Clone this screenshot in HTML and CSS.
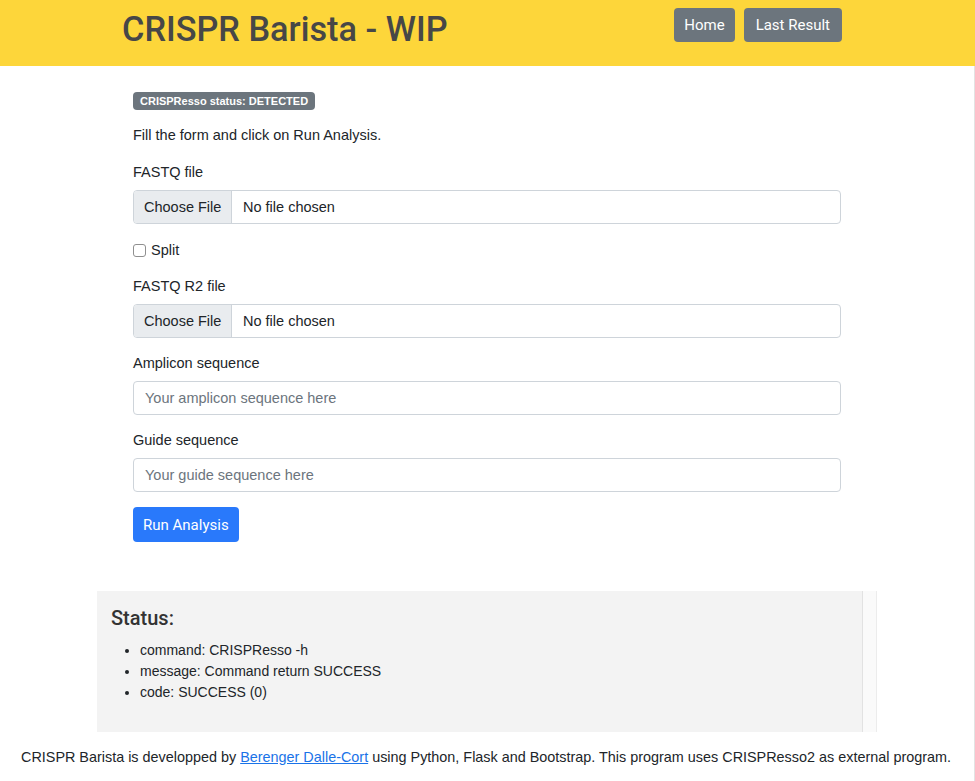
FILE: index.html
```html
<!DOCTYPE html>
<html>
<head>
<meta charset="utf-8">
<title>CRISPR Barista</title>
<link rel="stylesheet" href="styles.css">
</head>
<body>
<header class="topbar">
  <div class="topbar-inner">
    <h1 class="brand">CRISPR Barista - WIP</h1>
    <nav class="nav">
      <a class="btn btn-gray" href="#">Home</a>
      <a class="btn btn-gray" href="#">Last Result</a>
    </nav>
  </div>
</header>
<div class="page">
  <main class="main">
    <span class="badge">CRISPResso status: DETECTED</span>
    <p class="intro">Fill the form and click on Run Analysis.</p>
    <form class="form">
      <label class="label">FASTQ file</label>
      <div class="file"><span class="file-btn">Choose File</span><span class="file-name">No file chosen</span></div>
      <label class="check"><span class="box"></span>Split</label>
      <label class="label">FASTQ R2 file</label>
      <div class="file"><span class="file-btn">Choose File</span><span class="file-name">No file chosen</span></div>
      <label class="label">Amplicon sequence</label>
      <input class="input" type="text" placeholder="Your amplicon sequence here">
      <label class="label">Guide sequence</label>
      <input class="input" type="text" placeholder="Your guide sequence here">
      <button class="btn btn-blue" type="button">Run Analysis</button>
    </form>
  </main>
  <section class="status-row">
    <div class="status">
      <h2 class="status-title">Status:</h2>
      <ul class="status-list">
        <li>command: CRISPResso -h</li>
        <li>message: Command return SUCCESS</li>
        <li>code: SUCCESS (0)</li>
      </ul>
    </div>
    <div class="status-side"></div>
  </section>
  <footer class="footer">CRISPR Barista is developped by <a href="#">Berenger Dalle-Cort</a> using Python, Flask and Bootstrap. This program uses CRISPResso2 as external program.</footer>
</div>
</body>
</html>
```
FILE: styles.css
```css
* { box-sizing: border-box; }
html, body { margin: 0; padding: 0; }
body {
  font-family: "Liberation Sans", Arial, sans-serif;
  color: #212529;
  background: #fff;
  font-size: 14.5px;
  width: 975px;
  height: 781px;
  overflow: hidden;
}
.topbar {
  background: #fdd63a;
  height: 66px;
}
.topbar-inner {
  display: flex;
  justify-content: space-between;
  align-items: flex-start;
  margin-left: 122px;
  width: 720px;
}
.brand {
  margin: 0;
  font-family: Roboto, "Liberation Sans", sans-serif;
  font-weight: 500;
  font-size: 34.3px;
  line-height: 58px;
  color: #474747;
}
.nav {
  display: flex;
  gap: 9px;
  padding-top: 8px;
}
.btn {
  display: inline-flex;
  align-items: center;
  justify-content: center;
  height: 34px;
  padding: 0 12px;
  border-radius: 4px;
  font-family: Roboto, "Liberation Sans", sans-serif;
  font-size: 15px;
  color: #fff;
  text-decoration: none;
  border: 0;
  white-space: nowrap;
}
.nav .btn:first-child { padding: 0 10px; }
.btn-gray { background: #6c757d; }
.page {
  border-right: 1px solid #e3e3e3;
  height: 715px;
  width: 975px;
}
.main {
  margin-left: 133px;
  width: 708px;
  padding-top: 26px;
}
.badge {
  display: inline-block;
  background: #6c757d;
  color: #fff;
  font-weight: 700;
  font-size: 11px;
  line-height: 18px;
  padding: 0 7px;
  border-radius: 4px;
}
.intro {
  margin: 14px 0 0;
  line-height: 22px;
}
.form {
  display: flex;
  flex-direction: column;
  align-items: flex-start;
}
.label {
  display: block;
  line-height: 22px;
  margin-top: 14px;
  margin-bottom: 7px;
}
.intro + .form .label:first-child { margin-top: 15px; }
.file {
  display: flex;
  width: 708px;
  height: 34px;
  border: 1px solid #ced4da;
  border-radius: 4px;
  overflow: hidden;
  white-space: nowrap;
}
.file-btn {
  display: flex;
  align-items: center;
  padding: 0 10px;
  background: #e9ecef;
  border-right: 1px solid #ced4da;
  width: 98px;
  flex: none;
}
.file-name {
  display: flex;
  align-items: center;
  padding-left: 11px;
}
.check {
  display: flex;
  align-items: center;
  gap: 5px;
  line-height: 22px;
  margin-top: 15px;
}
.box {
  width: 13px;
  height: 13px;
  border: 1px solid #8f8f8f;
  border-radius: 3px;
  background: #fff;
}
.input {
  width: 708px;
  height: 34px;
  border: 1px solid #ced4da;
  border-radius: 4px;
  padding: 0 11px;
  font-family: "Liberation Sans", Arial, sans-serif;
  font-size: 14.5px;
  color: #495057;
}
.input::placeholder { color: #6c757d; }
.btn-blue {
  background: #2979fb;
  height: 35px;
  margin-top: 15px;
  padding: 0 10px;
}
.status-row {
  display: flex;
  margin-left: 97px;
  margin-top: 49px;
  height: 141px;
}
.status {
  width: 766px;
  background: #f3f3f3;
  border-right: 1px solid #e2e2e2;
  padding: 14px 14px;
}
.status-side {
  width: 14px;
  background: #fafafa;
  border-right: 1px solid #ececec;
}
.status-title {
  margin: 0;
  font-size: 20px;
  font-weight: 500;
  font-family: Roboto, "Liberation Sans", sans-serif;
  color: #333;
  line-height: 26px;
}
.status-list {
  margin: 9px 0 0;
  padding-left: 29px;
  font-size: 14px;
  line-height: 21px;
}
.footer {
  text-align: center;
  font-size: 14.4px;
  margin-top: 14px;
  line-height: 22px;
  padding-right: 2px;
}
.footer a { color: #1a73e8; text-decoration: underline; }
```
